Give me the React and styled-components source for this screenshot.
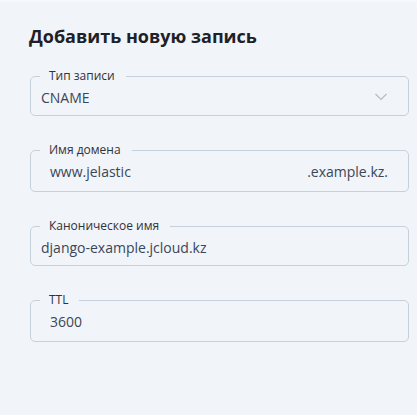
import styled, { createGlobalStyle } from "styled-components";

const GlobalStyle = createGlobalStyle`
  html, body {
    margin: 0;
    padding: 0;
    background: #f1f4f8;
  }
  body {
    font-family: "Open Sans", "Noto Sans", sans-serif;
  }
`;

const Page = styled.div`
  width: 417px;
  height: 415px;
  box-sizing: border-box;
  padding: 21px 8px 0 30px;
  background: #f1f4f8;
  border-top: 2px solid #f6f8fa;
`;

const Title = styled.h2`
  margin: 0 0 19px -1px;
  font-size: 18px;
  line-height: 26px;
  font-weight: 700;
  color: #1e2127;
`;

const Form = styled.div`
  display: flex;
  flex-direction: column;
  gap: 26px;
`;

const Field = styled.fieldset`
  margin: 0;
  padding: 0 10px 0 9px;
  border: 1px solid #c4d1dc;
  border-radius: 5px;
  min-width: 0;
`;

const Legend = styled.legend`
  margin-left: 0;
  padding: 0 11px 0 9px;
  font-size: 12px;
  line-height: 16px;
  color: #2f3338;
`;

const Row = styled.div`
  display: flex;
  align-items: center;
  height: 20px;
  padding: 3px 0 ${(p) => p.$bottom || 8}px ${(p) => (p.$indent ? 10 : 1)}px;
  font-size: 14px;
  color: #3b4659;
`;

const Value = styled.span`
  flex: 1;
  white-space: nowrap;
`;

const Suffix = styled.span`
  margin-right: 10px;
  color: #3b4659;
`;

const Chevron = styled.svg`
  width: 14px;
  height: 10px;
  margin-right: 10px;
`;

export default function App() {
  return (
    <>
      <GlobalStyle />
      <Page>
        <Title>Добавить новую запись</Title>
        <Form>
          <Field>
            <Legend>Тип записи</Legend>
            <Row>
              <Value>CNAME</Value>
              <Chevron viewBox="0 0 14 10">
                <polyline points="1.5,2 7,7.5 12.5,2" fill="none" stroke="#b3bcc6" strokeWidth="1.2" />
              </Chevron>
            </Row>
          </Field>
          <Field>
            <Legend>Имя домена</Legend>
            <Row $indent $bottom={10}>
              <Value>www.jelastic</Value>
              <Suffix>.example.kz.</Suffix>
            </Row>
          </Field>
          <Field>
            <Legend>Каноническое имя</Legend>
            <Row>
              <Value>django-example.jcloud.kz</Value>
            </Row>
          </Field>
          <Field>
            <Legend>TTL</Legend>
            <Row $indent $bottom={10}>
              <Value>3600</Value>
            </Row>
          </Field>
        </Form>
      </Page>
    </>
  );
}
